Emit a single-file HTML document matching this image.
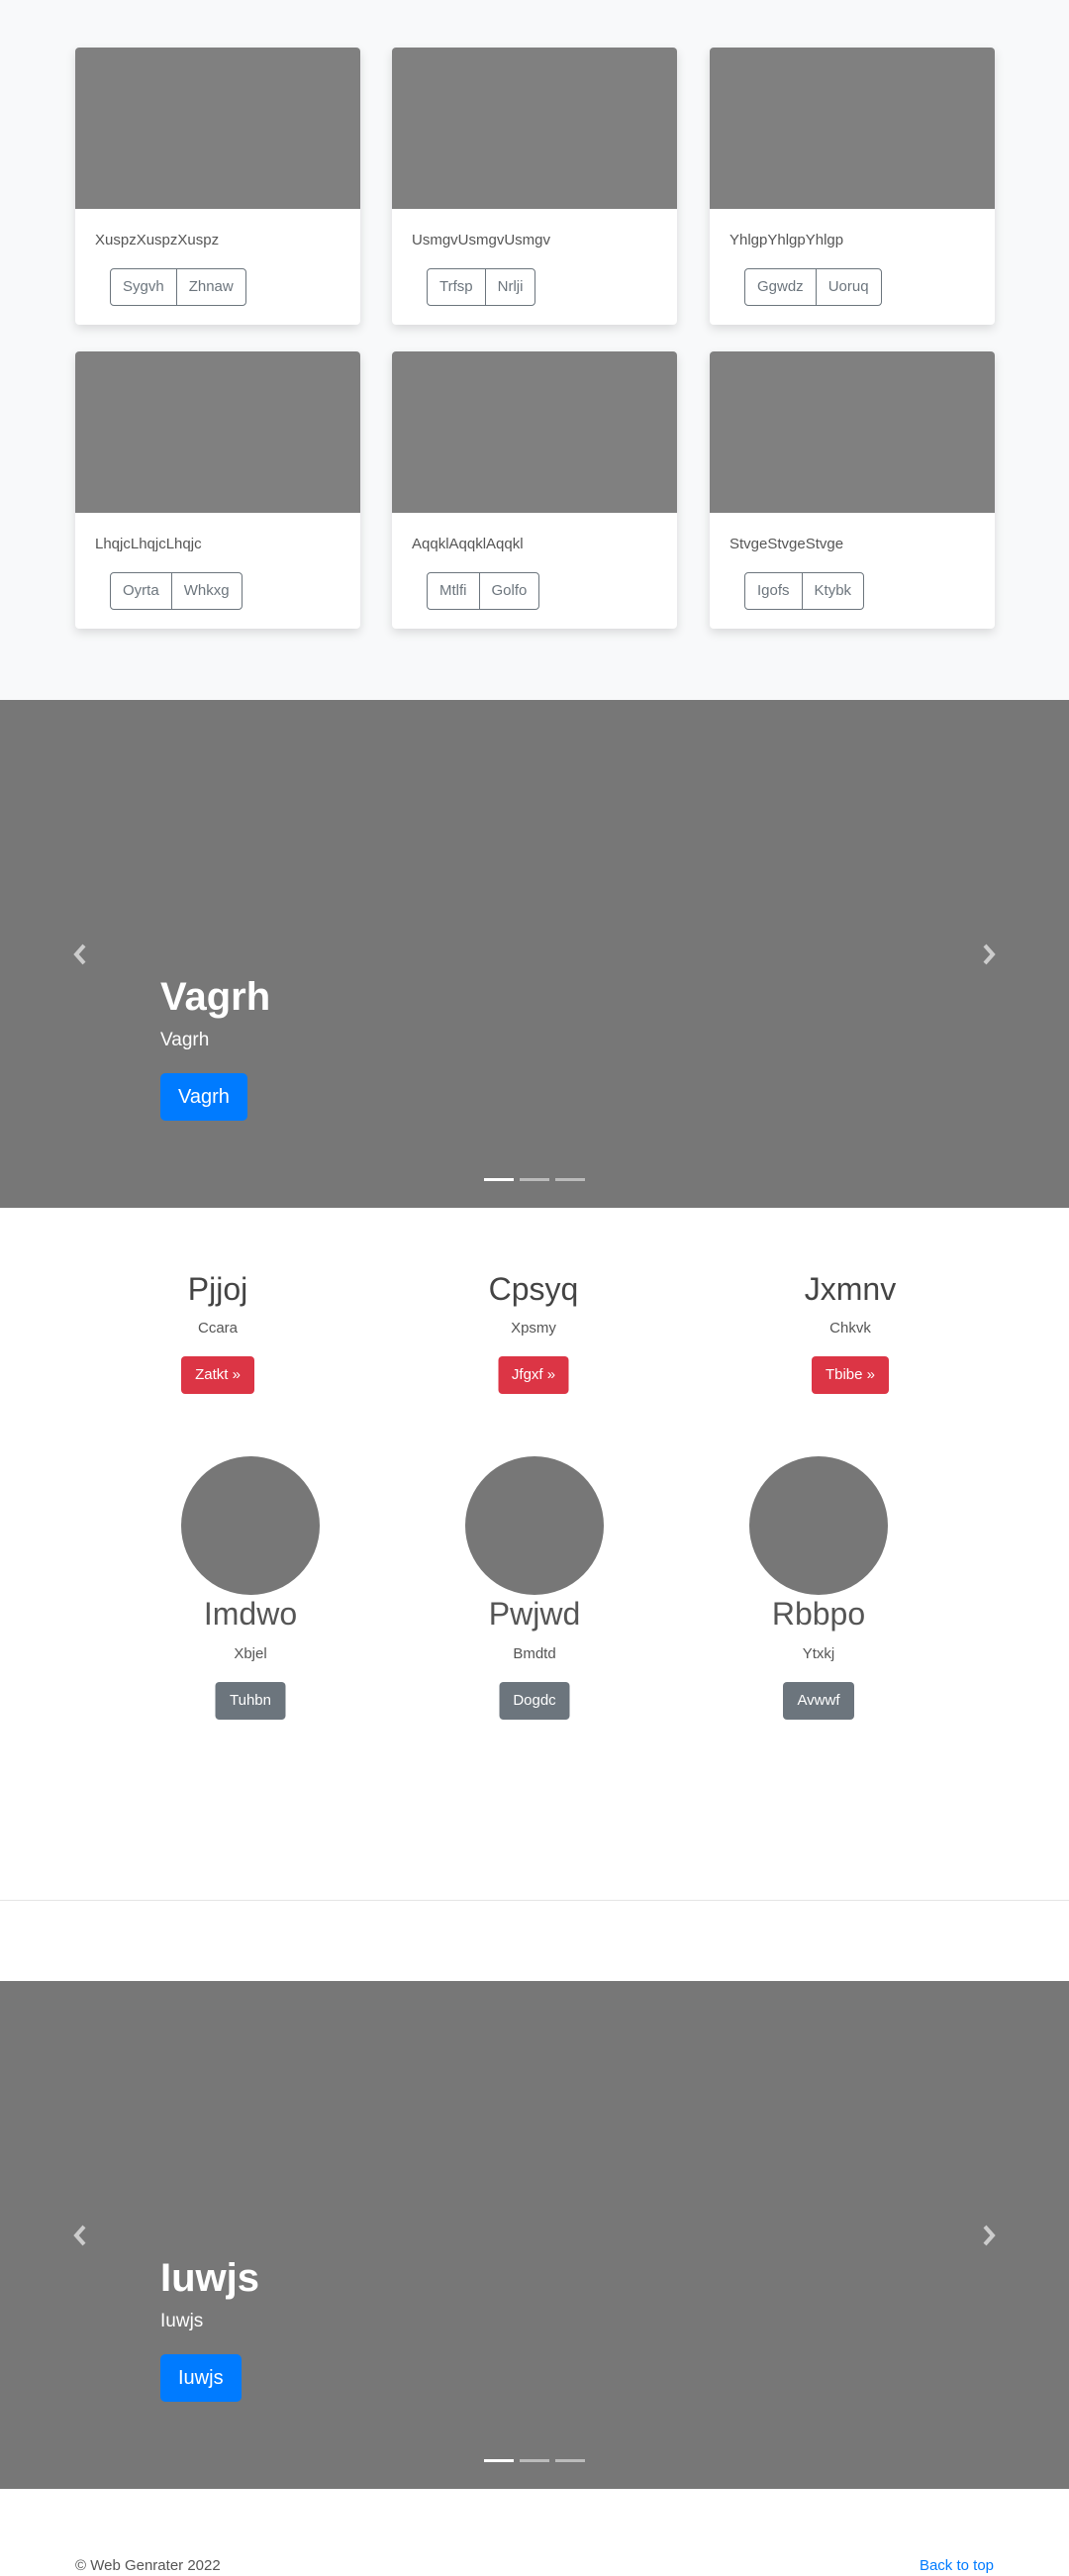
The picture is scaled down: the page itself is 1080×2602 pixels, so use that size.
<!DOCTYPE html>
<html><head><style>
*{box-sizing:border-box;margin:0;padding:0}
body{width:1080px;height:2602px;position:relative;font-family:"Liberation Sans",sans-serif;background:#fff;color:#212529;overflow:hidden}
.abs{position:absolute}
.card{position:absolute;width:288px;height:280px;background:#fff;border-radius:4px;box-shadow:0 4px 10px rgba(0,0,0,.13);overflow:hidden}
.card .img{height:163px;background:#808080}
.card .t{position:absolute;left:20px;top:186px;font-size:15px;color:#555}
.bg{position:absolute;left:35px;top:223px;display:flex;border:1px solid #6c757d;border-radius:4px;height:38px}
.bg span{font-size:15px;color:#6c757d;padding:0 12px;line-height:36px}
.bg span+span{border-left:1px solid #6c757d}
.car{position:absolute;left:0;width:1080px;height:513px;background:#777}
.car h1{position:absolute;left:162px;top:277px;font-size:40px;line-height:46px;color:#fff;font-weight:bold}
.car p{position:absolute;left:162px;top:333px;font-size:19px;color:#fff}
.car .b{position:absolute;left:162px;top:377px;height:48px;padding:0 18px;background:#007bff;color:#fff;border-radius:5px;font-size:20px;line-height:48px}
.car .ind{position:absolute;top:483px;height:3px;width:30px;background:rgba(255,255,255,.5)}
.car svg{position:absolute;top:246px}
.ctr{position:absolute;text-align:center;transform:translateX(-50%);white-space:nowrap}
</style></head><body>
<div class="abs" style="left:0;top:0;width:1080px;height:707px;background:#f8f9fa"></div>

<div class="card" style="left:76px;top:48px"><div class="img"></div><div class="t">XuspzXuspzXuspz</div><div class="bg"><span>Sygvh</span><span>Zhnaw</span></div></div>
<div class="card" style="left:396px;top:48px"><div class="img"></div><div class="t">UsmgvUsmgvUsmgv</div><div class="bg"><span>Trfsp</span><span>Nrlji</span></div></div>
<div class="card" style="left:717px;top:48px"><div class="img"></div><div class="t">YhlgpYhlgpYhlgp</div><div class="bg"><span>Ggwdz</span><span>Uoruq</span></div></div>
<div class="card" style="left:76px;top:355px"><div class="img"></div><div class="t">LhqjcLhqjcLhqjc</div><div class="bg"><span>Oyrta</span><span>Whkxg</span></div></div>
<div class="card" style="left:396px;top:355px"><div class="img"></div><div class="t">AqqklAqqklAqqkl</div><div class="bg"><span>Mtlfi</span><span>Golfo</span></div></div>
<div class="card" style="left:717px;top:355px"><div class="img"></div><div class="t">StvgeStvgeStvge</div><div class="bg"><span>Igofs</span><span>Ktybk</span></div></div>

<div class="car" style="top:707px">
<svg style="left:72px" width="18" height="22" viewBox="0 0 18 22"><path d="M13 2 L5 11 L13 20" stroke="#ccc" stroke-width="4" fill="none"/></svg>
<svg style="left:990px" width="18" height="22" viewBox="0 0 18 22"><path d="M5 2 L13 11 L5 20" stroke="#ccc" stroke-width="4" fill="none"/></svg>
<h1>Vagrh</h1><p>Vagrh</p><div class="b">Vagrh</div>
<div class="ind" style="left:489px;background:#fff"></div><div class="ind" style="left:525px"></div><div class="ind" style="left:561px"></div>
</div>

<div class="ctr" style="left:220px;top:1284px;font-size:32px;color:#444">Pjjoj</div>
<div class="ctr" style="left:539px;top:1284px;font-size:32px;color:#444">Cpsyq</div>
<div class="ctr" style="left:859px;top:1284px;font-size:32px;color:#444">Jxmnv</div>
<div class="ctr" style="left:220px;top:1333px;font-size:15px;color:#555">Ccara</div>
<div class="ctr" style="left:539px;top:1333px;font-size:15px;color:#555">Xpsmy</div>
<div class="ctr" style="left:859px;top:1333px;font-size:15px;color:#555">Chkvk</div>
<div class="ctr" style="left:220px;top:1370px;height:38px;width:74px;background:#dc3545;color:#fff;border-radius:4px;font-size:15px;line-height:38px">Zatkt »</div>
<div class="ctr" style="left:539px;top:1370px;height:38px;width:71px;background:#dc3545;color:#fff;border-radius:4px;font-size:15px;line-height:38px">Jfgxf »</div>
<div class="ctr" style="left:859px;top:1370px;height:38px;width:78px;background:#dc3545;color:#fff;border-radius:4px;font-size:15px;line-height:38px">Tbibe »</div>

<div class="abs" style="left:183px;top:1471px;width:140px;height:140px;border-radius:50%;background:#777"></div>
<div class="abs" style="left:470px;top:1471px;width:140px;height:140px;border-radius:50%;background:#777"></div>
<div class="abs" style="left:757px;top:1471px;width:140px;height:140px;border-radius:50%;background:#777"></div>
<div class="ctr" style="left:253px;top:1612px;font-size:32px;color:#555">Imdwo</div>
<div class="ctr" style="left:540px;top:1612px;font-size:32px;color:#555">Pwjwd</div>
<div class="ctr" style="left:827px;top:1612px;font-size:32px;color:#555">Rbbpo</div>
<div class="ctr" style="left:253px;top:1662px;font-size:15px;color:#555">Xbjel</div>
<div class="ctr" style="left:540px;top:1662px;font-size:15px;color:#555">Bmdtd</div>
<div class="ctr" style="left:827px;top:1662px;font-size:15px;color:#555">Ytxkj</div>
<div class="ctr" style="left:253px;top:1699px;height:38px;width:71px;background:#6c757d;color:#fff;border-radius:4px;font-size:15px;line-height:38px">Tuhbn</div>
<div class="ctr" style="left:540px;top:1699px;height:38px;width:71px;background:#6c757d;color:#fff;border-radius:4px;font-size:15px;line-height:38px">Dogdc</div>
<div class="ctr" style="left:827px;top:1699px;height:38px;width:72px;background:#6c757d;color:#fff;border-radius:4px;font-size:15px;line-height:38px">Avwwf</div>

<div class="abs" style="left:0;top:1919px;width:1080px;height:1px;background:#e5e5e5"></div>

<div class="car" style="top:2001px">
<svg style="left:72px" width="18" height="22" viewBox="0 0 18 22"><path d="M13 2 L5 11 L13 20" stroke="#ccc" stroke-width="4" fill="none"/></svg>
<svg style="left:990px" width="18" height="22" viewBox="0 0 18 22"><path d="M5 2 L13 11 L5 20" stroke="#ccc" stroke-width="4" fill="none"/></svg>
<h1>Iuwjs</h1><p>Iuwjs</p><div class="b">Iuwjs</div>
<div class="ind" style="left:489px;background:#fff"></div><div class="ind" style="left:525px"></div><div class="ind" style="left:561px"></div>
</div>

<div class="abs" style="left:76px;top:2583px;font-size:15px;color:#555">© Web Genrater 2022</div>
<div class="abs" style="right:76px;top:2583px;font-size:15px;color:#007bff">Back to top</div>
</body></html>
